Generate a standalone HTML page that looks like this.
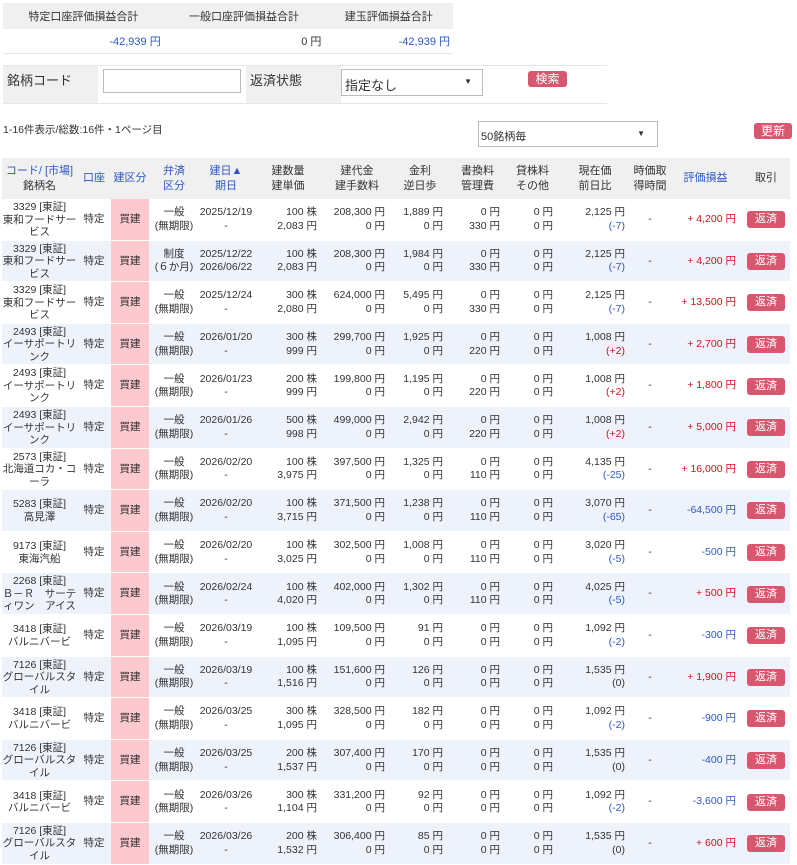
<!DOCTYPE html>
<html><head><meta charset="utf-8">
<style>
*{box-sizing:border-box;margin:0;padding:0}
body{width:797px;height:865px;overflow:hidden;background:#fff;font-family:"Liberation Sans","Noto Sans CJK JP",sans-serif;font-size:11px;color:#333}
.blue{color:#2e57c5}.red{color:#d0101c}
#sum{position:absolute;left:3px;top:3px;width:450px;border-collapse:collapse}
#sum th{background:#f0f0f0;font-weight:normal;height:26px;text-align:center}
#sum td{height:24px;text-align:right;padding-right:3px;border-bottom:1px solid #e6e6e6}
#form{position:absolute;left:3px;top:65px;width:604px;height:39px;border-top:1px solid #e6e6e6;border-bottom:1px solid #e6e6e6}
.lab{position:absolute;top:0;height:37px;background:#f0f0f0;font-size:13px;padding:4px 4px}
.inp{position:absolute;border:1px solid #bbb;background:#fff;font-size:13px}
.btn{position:absolute;background:#d9566f;color:#fff;border-radius:3px;text-align:center;font-size:12px}
#info{position:absolute;left:3px;top:122px;font-size:10.5px}
#tbl{position:absolute;left:2px;top:158px;border-collapse:collapse;table-layout:fixed;width:788px}
#tbl th{background:#f0f0f0;font-weight:normal;height:41px;line-height:15px;text-align:center;padding:0}
#tbl td{height:41.6px;line-height:13.5px;padding:0;overflow:hidden;font-size:10.5px;box-shadow:inset 0 -1px 0 #fff}
#tbl tr:nth-child(odd) td{background:#eef2fb}
#tbl td.c{text-align:center}
#tbl td.n{text-align:center;line-height:12.5px;font-size:10.5px}
#tbl td.r{text-align:right;padding-right:6px}
#tbl td.pk{background:#fcc9cf!important;text-align:center}
.rb{display:inline-block;width:38px;height:17px;line-height:17px;background:#d9566f;color:#fff;border-radius:3px;text-align:center;font-size:11px}
</style></head><body>
<table id="sum"><tr><th>特定口座評価損益合計</th><th>一般口座評価損益合計</th><th>建玉評価損益合計</th></tr>
<tr><td class="blue">-42,939 円</td><td>0 円</td><td class="blue">-42,939 円</td></tr></table>
<div id="form">
<div class="lab" style="left:0;width:95px">銘柄コード</div>
<div class="inp" style="left:100px;top:3px;width:138px;height:24px"></div>
<div class="lab" style="left:243px;width:95px">返済状態</div>
<div class="inp" style="left:338px;top:3px;width:142px;height:27px;padding:5px 3px">指定なし<span style="position:absolute;right:10px;top:7px;font-size:8px">▼</span></div>
<div class="btn" style="left:525px;top:5px;width:39px;height:16px;line-height:16px">検索</div>
</div>
<div id="info">1-16件表示/総数:16件・1ページ目</div>
<div class="inp" style="left:478px;top:121px;width:180px;height:26px;padding:6px 2px;font-size:11px">50銘柄毎<span style="position:absolute;right:12px;top:7px;font-size:8px">▼</span></div>
<div class="btn" style="left:754px;top:123px;width:38px;height:16px;line-height:16px">更新</div>
<table id="tbl">
<colgroup><col style="width:75px"><col style="width:34px"><col style="width:38px"><col style="width:50px"><col style="width:54px"><col style="width:70px"><col style="width:68px"><col style="width:58px"><col style="width:57px"><col style="width:53px"><col style="width:72px"><col style="width:38px"><col style="width:73px"><col style="width:48px"></colgroup>
<tr><th><span class="blue">コード/ [市場]</span><br>銘柄名</th><th class="blue">口座</th><th class="blue">建区分</th><th class="blue">弁済<br>区分</th><th class="blue">建日▲<br>期日</th><th>建数量<br>建単価</th><th>建代金<br>建手数料</th><th>金利<br>逆日歩</th><th>書換料<br>管理費</th><th>貸株料<br>その他</th><th>現在価<br>前日比</th><th>時価取<br>得時間</th><th class="blue">評価損益</th><th>取引</th></tr>
<tr><td class="n">3329 [東証]<br>東和フードサービス</td><td class="c">特定</td><td class="pk">買建</td><td class="c">一般<br>(無期限)</td><td class="c">2025/12/19<br>-</td><td class="r">100 株<br>2,083 円</td><td class="r">208,300 円<br>0 円</td><td class="r">1,889 円<br>0 円</td><td class="r">0 円<br>330 円</td><td class="r">0 円<br>0 円</td><td class="r">2,125 円<br><span class="blue">(-7)</span></td><td class="c">-</td><td class="r red">+ 4,200 円</td><td class="c"><span class="rb">返済</span></td></tr>
<tr><td class="n">3329 [東証]<br>東和フードサービス</td><td class="c">特定</td><td class="pk">買建</td><td class="c">制度<br>(６か月)</td><td class="c">2025/12/22<br>2026/06/22</td><td class="r">100 株<br>2,083 円</td><td class="r">208,300 円<br>0 円</td><td class="r">1,984 円<br>0 円</td><td class="r">0 円<br>330 円</td><td class="r">0 円<br>0 円</td><td class="r">2,125 円<br><span class="blue">(-7)</span></td><td class="c">-</td><td class="r red">+ 4,200 円</td><td class="c"><span class="rb">返済</span></td></tr>
<tr><td class="n">3329 [東証]<br>東和フードサービス</td><td class="c">特定</td><td class="pk">買建</td><td class="c">一般<br>(無期限)</td><td class="c">2025/12/24<br>-</td><td class="r">300 株<br>2,080 円</td><td class="r">624,000 円<br>0 円</td><td class="r">5,495 円<br>0 円</td><td class="r">0 円<br>330 円</td><td class="r">0 円<br>0 円</td><td class="r">2,125 円<br><span class="blue">(-7)</span></td><td class="c">-</td><td class="r red">+ 13,500 円</td><td class="c"><span class="rb">返済</span></td></tr>
<tr><td class="n">2493 [東証]<br>イーサポートリンク</td><td class="c">特定</td><td class="pk">買建</td><td class="c">一般<br>(無期限)</td><td class="c">2026/01/20<br>-</td><td class="r">300 株<br>999 円</td><td class="r">299,700 円<br>0 円</td><td class="r">1,925 円<br>0 円</td><td class="r">0 円<br>220 円</td><td class="r">0 円<br>0 円</td><td class="r">1,008 円<br><span class="red">(+2)</span></td><td class="c">-</td><td class="r red">+ 2,700 円</td><td class="c"><span class="rb">返済</span></td></tr>
<tr><td class="n">2493 [東証]<br>イーサポートリンク</td><td class="c">特定</td><td class="pk">買建</td><td class="c">一般<br>(無期限)</td><td class="c">2026/01/23<br>-</td><td class="r">200 株<br>999 円</td><td class="r">199,800 円<br>0 円</td><td class="r">1,195 円<br>0 円</td><td class="r">0 円<br>220 円</td><td class="r">0 円<br>0 円</td><td class="r">1,008 円<br><span class="red">(+2)</span></td><td class="c">-</td><td class="r red">+ 1,800 円</td><td class="c"><span class="rb">返済</span></td></tr>
<tr><td class="n">2493 [東証]<br>イーサポートリンク</td><td class="c">特定</td><td class="pk">買建</td><td class="c">一般<br>(無期限)</td><td class="c">2026/01/26<br>-</td><td class="r">500 株<br>998 円</td><td class="r">499,000 円<br>0 円</td><td class="r">2,942 円<br>0 円</td><td class="r">0 円<br>220 円</td><td class="r">0 円<br>0 円</td><td class="r">1,008 円<br><span class="red">(+2)</span></td><td class="c">-</td><td class="r red">+ 5,000 円</td><td class="c"><span class="rb">返済</span></td></tr>
<tr><td class="n">2573 [東証]<br>北海道コカ・コーラ</td><td class="c">特定</td><td class="pk">買建</td><td class="c">一般<br>(無期限)</td><td class="c">2026/02/20<br>-</td><td class="r">100 株<br>3,975 円</td><td class="r">397,500 円<br>0 円</td><td class="r">1,325 円<br>0 円</td><td class="r">0 円<br>110 円</td><td class="r">0 円<br>0 円</td><td class="r">4,135 円<br><span class="blue">(-25)</span></td><td class="c">-</td><td class="r red">+ 16,000 円</td><td class="c"><span class="rb">返済</span></td></tr>
<tr><td class="n">5283 [東証]<br>高見澤</td><td class="c">特定</td><td class="pk">買建</td><td class="c">一般<br>(無期限)</td><td class="c">2026/02/20<br>-</td><td class="r">100 株<br>3,715 円</td><td class="r">371,500 円<br>0 円</td><td class="r">1,238 円<br>0 円</td><td class="r">0 円<br>110 円</td><td class="r">0 円<br>0 円</td><td class="r">3,070 円<br><span class="blue">(-65)</span></td><td class="c">-</td><td class="r blue">-64,500 円</td><td class="c"><span class="rb">返済</span></td></tr>
<tr><td class="n">9173 [東証]<br>東海汽船</td><td class="c">特定</td><td class="pk">買建</td><td class="c">一般<br>(無期限)</td><td class="c">2026/02/20<br>-</td><td class="r">100 株<br>3,025 円</td><td class="r">302,500 円<br>0 円</td><td class="r">1,008 円<br>0 円</td><td class="r">0 円<br>110 円</td><td class="r">0 円<br>0 円</td><td class="r">3,020 円<br><span class="blue">(-5)</span></td><td class="c">-</td><td class="r blue">-500 円</td><td class="c"><span class="rb">返済</span></td></tr>
<tr><td class="n">2268 [東証]<br>Ｂ－Ｒ　サーテ<br>ィワン　アイス</td><td class="c">特定</td><td class="pk">買建</td><td class="c">一般<br>(無期限)</td><td class="c">2026/02/24<br>-</td><td class="r">100 株<br>4,020 円</td><td class="r">402,000 円<br>0 円</td><td class="r">1,302 円<br>0 円</td><td class="r">0 円<br>110 円</td><td class="r">0 円<br>0 円</td><td class="r">4,025 円<br><span class="blue">(-5)</span></td><td class="c">-</td><td class="r red">+ 500 円</td><td class="c"><span class="rb">返済</span></td></tr>
<tr><td class="n">3418 [東証]<br>バルニバービ</td><td class="c">特定</td><td class="pk">買建</td><td class="c">一般<br>(無期限)</td><td class="c">2026/03/19<br>-</td><td class="r">100 株<br>1,095 円</td><td class="r">109,500 円<br>0 円</td><td class="r">91 円<br>0 円</td><td class="r">0 円<br>0 円</td><td class="r">0 円<br>0 円</td><td class="r">1,092 円<br><span class="blue">(-2)</span></td><td class="c">-</td><td class="r blue">-300 円</td><td class="c"><span class="rb">返済</span></td></tr>
<tr><td class="n">7126 [東証]<br>グローバルスタイル</td><td class="c">特定</td><td class="pk">買建</td><td class="c">一般<br>(無期限)</td><td class="c">2026/03/19<br>-</td><td class="r">100 株<br>1,516 円</td><td class="r">151,600 円<br>0 円</td><td class="r">126 円<br>0 円</td><td class="r">0 円<br>0 円</td><td class="r">0 円<br>0 円</td><td class="r">1,535 円<br>(0)</td><td class="c">-</td><td class="r red">+ 1,900 円</td><td class="c"><span class="rb">返済</span></td></tr>
<tr><td class="n">3418 [東証]<br>バルニバービ</td><td class="c">特定</td><td class="pk">買建</td><td class="c">一般<br>(無期限)</td><td class="c">2026/03/25<br>-</td><td class="r">300 株<br>1,095 円</td><td class="r">328,500 円<br>0 円</td><td class="r">182 円<br>0 円</td><td class="r">0 円<br>0 円</td><td class="r">0 円<br>0 円</td><td class="r">1,092 円<br><span class="blue">(-2)</span></td><td class="c">-</td><td class="r blue">-900 円</td><td class="c"><span class="rb">返済</span></td></tr>
<tr><td class="n">7126 [東証]<br>グローバルスタイル</td><td class="c">特定</td><td class="pk">買建</td><td class="c">一般<br>(無期限)</td><td class="c">2026/03/25<br>-</td><td class="r">200 株<br>1,537 円</td><td class="r">307,400 円<br>0 円</td><td class="r">170 円<br>0 円</td><td class="r">0 円<br>0 円</td><td class="r">0 円<br>0 円</td><td class="r">1,535 円<br>(0)</td><td class="c">-</td><td class="r blue">-400 円</td><td class="c"><span class="rb">返済</span></td></tr>
<tr><td class="n">3418 [東証]<br>バルニバービ</td><td class="c">特定</td><td class="pk">買建</td><td class="c">一般<br>(無期限)</td><td class="c">2026/03/26<br>-</td><td class="r">300 株<br>1,104 円</td><td class="r">331,200 円<br>0 円</td><td class="r">92 円<br>0 円</td><td class="r">0 円<br>0 円</td><td class="r">0 円<br>0 円</td><td class="r">1,092 円<br><span class="blue">(-2)</span></td><td class="c">-</td><td class="r blue">-3,600 円</td><td class="c"><span class="rb">返済</span></td></tr>
<tr><td class="n">7126 [東証]<br>グローバルスタイル</td><td class="c">特定</td><td class="pk">買建</td><td class="c">一般<br>(無期限)</td><td class="c">2026/03/26<br>-</td><td class="r">200 株<br>1,532 円</td><td class="r">306,400 円<br>0 円</td><td class="r">85 円<br>0 円</td><td class="r">0 円<br>0 円</td><td class="r">0 円<br>0 円</td><td class="r">1,535 円<br>(0)</td><td class="c">-</td><td class="r red">+ 600 円</td><td class="c"><span class="rb">返済</span></td></tr>
</table>
</body></html>
